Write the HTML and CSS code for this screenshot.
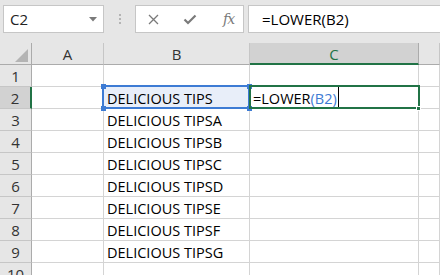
FILE: index.html
```html
<!DOCTYPE html>
<html lang="en">
<head>
    <meta charset="UTF-8">
    <meta name="viewport" content="width=device-width, initial-scale=1.0">
    <title>LOWER formula</title>
    <link rel="stylesheet" href="styles.css">
</head>
<body>
    <div class="toolbar">
        <div class="name-box">
            <span>C2</span>
            <svg class="drop" width="8" height="5" viewBox="0 0 8 5"><path d="M0 0H8L4 4.5Z" fill="#7a7a7a"/></svg>
        </div>
        <div class="grip"><i></i><i></i><i></i></div>
        <div class="fn-buttons">
            <svg class="btn-cancel" width="11" height="11" viewBox="0 0 11 11"><path d="M1 1L10 10M10 1L1 10" stroke="#7a7a7a" stroke-width="1.3" fill="none"/></svg>
            <svg class="btn-enter" width="14" height="11" viewBox="0 0 14 11"><path d="M1.5 5.5L5 9L12.5 1.5" stroke="#7a7a7a" stroke-width="2.2" fill="none"/></svg>
            <span class="btn-fx">fx</span>
        </div>
        <div class="formula-input">=LOWER(B2)</div>
    </div>

    <div class="sheet" id="sheet">
        <!-- cells are filled in by the script below -->
    </div>

    <script>
        const columns = ['A', 'B', 'C', 'D'];
        const values = {
            B2: 'DELICIOUS TIPS',
            B3: 'DELICIOUS TIPSA',
            B4: 'DELICIOUS TIPSB',
            B5: 'DELICIOUS TIPSC',
            B6: 'DELICIOUS TIPSD',
            B7: 'DELICIOUS TIPSE',
            B8: 'DELICIOUS TIPSF',
            B9: 'DELICIOUS TIPSG'
        };
        const activeCell = 'C2';
        const refCell = 'B2';

        function buildSheet() {
            const sheet = document.getElementById('sheet');
            let html = '<div class="corner"><span class="corner-tri"></span></div>';

            columns.forEach(col => {
                const on = col === activeCell[0] ? ' selected' : '';
                // column D is only partly in view, its letter sits off screen
                const label = col === 'D' ? '' : col;
                html += `<div class="col-head${on}">${label}</div>`;
            });

            for (let row = 1; row <= 10; row++) {
                const on = String(row) === activeCell.slice(1) ? ' selected' : '';
                html += `<div class="row-head${on}">${row}</div>`;

                columns.forEach(col => {
                    const ref = col + row;
                    if (ref === activeCell) {
                        html += `<div class="cell active">=LOWER<span class="ref-text">(B2)</span><i class="caret"></i><span class="fill-handle"></span></div>`;
                    } else if (ref === refCell) {
                        html += `<div class="cell referenced">${values[ref]}<span class="h tl"></span><span class="h tr"></span><span class="h bl"></span><span class="h br"></span></div>`;
                    } else {
                        html += `<div class="cell">${values[ref] || ''}</div>`;
                    }
                });
            }
            sheet.innerHTML = html;
        }

        buildSheet();
    </script>
</body>
</html>
```

FILE: styles.css
```css
* {
    margin: 0;
    padding: 0;
    box-sizing: border-box;
}

body {
    width: 440px;
    height: 275px;
    overflow: hidden;
    background-color: #e6e6e6;
    font-family: "Open Sans", Arial, sans-serif;
    color: #000;
}

/* formula bar */
.toolbar {
    display: flex;
    align-items: flex-start;
    height: 43px;
    padding: 5px 0 0 3px;
}

.name-box {
    width: 101px;
    height: 28px;
    background-color: #fff;
    border: 1px solid #c6c6c6;
    display: flex;
    align-items: center;
    justify-content: space-between;
    padding: 0 6px 0 6px;
    font-size: 15px;
    color: #222;
}

.drop {
    margin-top: 1px;
}

.grip {
    width: 31px;
    height: 28px;
    display: flex;
    flex-direction: column;
    align-items: center;
    justify-content: center;
    gap: 2px;
}

.grip i {
    width: 2px;
    height: 2px;
    background-color: #b4b4b4;
}

.fn-buttons {
    width: 109px;
    height: 28px;
    background-color: #fff;
    border: 1px solid #c6c6c6;
    display: flex;
    align-items: center;
    padding-left: 12px;
}

.btn-enter {
    margin-left: 24px;
}

.btn-fx {
    margin-left: 26px;
    font-family: "DejaVu Serif", "Liberation Serif", serif;
    font-style: italic;
    font-size: 14px;
    color: #7a7a7a;
    letter-spacing: -1px;
}

.formula-input {
    flex: 1;
    height: 28px;
    margin-left: 4px;
    background-color: #fff;
    border: 1px solid #c6c6c6;
    border-right: none;
    padding-left: 13px;
    font-size: 15px;
    line-height: 26px;
    white-space: nowrap;
}

/* grid */
.sheet {
    display: grid;
    grid-template-columns: 32px 72px 146px 169px 21px;
    grid-auto-rows: 22px;
    background-color: #fff;
}

.corner,
.col-head,
.row-head {
    background-color: #e6e6e6;
    color: #333;
    font-size: 15px;
    display: flex;
    align-items: center;
    justify-content: center;
}

.corner {
    position: relative;
    border-right: 1px solid #ababab;
    border-bottom: 1px solid #ababab;
}

.corner-tri {
    position: absolute;
    right: 3px;
    bottom: 2px;
    width: 0;
    height: 0;
    border-left: 13px solid transparent;
    border-bottom: 13px solid #b4b4b4;
}

.col-head {
    border-right: 1px solid #c6c6c6;
    border-bottom: 1px solid #ababab;
    padding-top: 1px;
}

.col-head.selected {
    background-color: #d2d2d2;
    color: #217346;
    border-right-color: #ababab;
    border-bottom: 2px solid #217346;
}

.row-head {
    border-right: 1px solid #ababab;
    border-bottom: 1px solid #c6c6c6;
    padding-top: 1px;
}

.row-head.selected {
    background-color: #d2d2d2;
    border-right: 2px solid #217346;
}

.cell {
    position: relative;
    border-right: 1px solid #d4d4d4;
    border-bottom: 1px solid #d4d4d4;
    font-size: 14.5px;
    line-height: 21px;
    padding: 1px 0 0 3px;
    white-space: nowrap;
}

.cell.referenced {
    background-color: #e8eef9;
    z-index: 1;
}

.cell.referenced::before {
    content: "";
    position: absolute;
    left: -2px;
    top: -2px;
    right: -1px;
    bottom: -1px;
    border: 2px solid #3d7bd4;
}

.h {
    position: absolute;
    width: 5px;
    height: 5px;
    background-color: #3d7bd4;
}

.tl { left: -3px; top: -3px; }
.tr { right: -3px; top: -3px; }
.bl { left: -3px; bottom: -3px; }
.br { right: -3px; bottom: -3px; }

.cell.active {
    z-index: 2;
    padding-left: 3px;
}

.cell.active::before {
    content: "";
    position: absolute;
    left: -1px;
    top: -2px;
    right: -2px;
    bottom: -1px;
    border: 2px solid #217346;
}

.ref-text {
    color: #3d7bd4;
}

.caret {
    display: inline-block;
    width: 1px;
    height: 21px;
    margin-left: 1px;
    vertical-align: top;
    margin-top: -1px;
    background-color: #000;
}

.fill-handle {
    position: absolute;
    right: -3px;
    bottom: -3px;
    width: 5px;
    height: 5px;
    background-color: #217346;
    border: 1px solid #fff;
}
```
